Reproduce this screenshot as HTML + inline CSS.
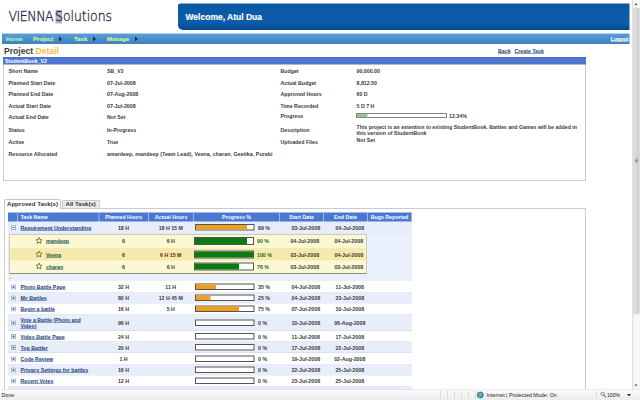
<!DOCTYPE html><html><head><meta charset="utf-8"><title>Project Detail</title><style>
html,body{margin:0;padding:0;background:#fff;overflow:hidden;width:640px;height:400px}
#s{position:absolute;left:0;top:0;width:1280px;height:800px;transform:scale(.5);transform-origin:0 0;font-family:"Liberation Sans",sans-serif;font-weight:bold;font-size:10.5px;color:#3a3a3a;overflow:hidden;background:#fff}
#s div,#s span,#s a{position:absolute;white-space:nowrap;box-sizing:border-box}
.t{line-height:14px;height:14px}
a{color:#1c3f7c;text-decoration:underline}
.nav{color:#d6f59c;-webkit-text-stroke:0.25px;font-size:12px;line-height:20px;top:68px;height:20px}
.arr{width:0;height:0;border-left:6px solid #0c2a5a;border-top:5px solid transparent;border-bottom:5px solid transparent;top:73px}
.hd{color:#fff;top:425px;height:19px;line-height:18px;text-align:center;border-right:2px solid #9db6ea;font-size:10.5px}
.c{text-align:center}
.pb{border:2px solid #555;background:#fff;height:13px}
.pf{left:0;top:0;height:9px}
</style></head><body><div id="s">
<div style="left:111px;top:20px;width:13px;height:27px;background:#b4b4bd"></div>
<div id="lg1" style="left:17px;top:20px;font-family:'DejaVu Sans Light','DejaVu Sans',sans-serif;font-size:25px;font-weight:200;line-height:32px;color:#1b2140;-webkit-text-stroke:0.55px #1b2140;transform:scaleY(1.17);transform-origin:0 100%;letter-spacing:-0.9px">VIENNA</div>
<div id="lg2" style="left:110px;top:20px;font-family:'DejaVu Sans Light','DejaVu Sans',sans-serif;font-size:25px;font-weight:200;line-height:32px;color:#1b2140;-webkit-text-stroke:0.55px #1b2140;transform:scaleY(1.17);transform-origin:0 100%;letter-spacing:-0.1px">Solutions</div>
<div style="left:356px;top:7px;width:903px;height:53px;background:linear-gradient(#0a58a6 0%,#0c5dab 70%,#084a8f 100%);border-radius:4px 0 0 10px"></div>
<div style="left:371px;top:24px;font-size:17px;line-height:22px;color:#fff;-webkit-text-stroke:0.3px #fff">Welcome, Atul Dua</div>
<div style="left:4px;top:66px;width:1255px;height:22px;background:linear-gradient(#d8eefa 0,#5a9bd3 3px,#4a8fca 12px,#3d80bd 100%)"></div>
<div class="nav" style="left:12px;color:#a4f2b4">Home</div>
<div class="nav" style="left:66px;color:#d6f59c">Project</div>
<div class="nav" style="left:148px;color:#d6f59c">Task</div>
<div class="nav" style="left:214px;color:#d6f59c">Manage</div>
<div class="arr" style="left:118px"></div>
<div class="arr" style="left:186px"></div>
<div class="arr" style="left:270px"></div>
<a class="nav" style="right:23px;color:#fff;font-size:10.5px">Logout</a>
<div style="left:8px;top:91px;font-size:17.2px;line-height:22px;color:#3c3c3c">Project <span style="position:static;color:#efc04e">Detail</span></div>
<a class="t" style="left:996px;top:95px">Back</a><a class="t" style="left:1029px;top:95px">Create Task</a>
<div style="left:6px;top:114px;width:1166px;height:248px;border:2px solid #cbcbcb;border-top:none"></div>
<div style="left:6px;top:114px;width:1166px;height:15px;background:linear-gradient(#4a6cc4 0,#5379d8 5px,#4f74d0 11px,#5a72b8 100%)"></div>
<div class="t" style="left:10px;top:114px;color:#fff">StudentBook_V2</div>
<div class="t" style="left:17px;top:135px">Short Name</div><div class="t" style="left:214px;top:135px;letter-spacing:0px">SB_V2</div>
<div class="t" style="left:17px;top:158.5px">Planned Start Date</div><div class="t" style="left:214px;top:158.5px;letter-spacing:0px">07-Jul-2008</div>
<div class="t" style="left:17px;top:180px">Planned End Date</div><div class="t" style="left:214px;top:180px;letter-spacing:0px">07-Aug-2008</div>
<div class="t" style="left:17px;top:204.5px">Actual Start Date</div><div class="t" style="left:214px;top:204.5px;letter-spacing:0px">07-Jul-2008</div>
<div class="t" style="left:17px;top:226px">Actual End Date</div><div class="t" style="left:214px;top:226px;letter-spacing:0px">Not Set</div>
<div class="t" style="left:17px;top:252.5px">Status</div><div class="t" style="left:214px;top:252.5px;letter-spacing:0px">In-Progress</div>
<div class="t" style="left:17px;top:277px">Active</div><div class="t" style="left:214px;top:277px;letter-spacing:0px">True</div>
<div class="t" style="left:17px;top:301px">Resource Allocated</div><div class="t" style="left:214px;top:301px;letter-spacing:0.11px">amardeep, mandeep (Team Lead), Veena, charan, Geetika, Purabi</div>
<div class="t" style="left:561px;top:135px">Budget</div>
<div class="t" style="left:713px;top:135px">90,000.00</div>
<div class="t" style="left:561px;top:158.5px">Actual Budget</div>
<div class="t" style="left:713px;top:158.5px">8,812.50</div>
<div class="t" style="left:561px;top:180px">Approved Hours</div>
<div class="t" style="left:713px;top:180px">60 D</div>
<div class="t" style="left:561px;top:204.5px">Time Recorded</div>
<div class="t" style="left:713px;top:204.5px">5 D 7 H</div>
<div class="t" style="left:561px;top:224px">Progress</div>
<div class="t" style="left:561px;top:252.5px">Description</div>
<div class="t" style="left:561px;top:276px">Uploaded Files</div>
<div style="left:712px;top:226px;width:182px;height:10px;border:2px solid #7d8a7d;background:#fff"><div style="left:0;top:0;width:21px;height:6px;background:#8fc79b"></div></div>
<div class="t" style="left:898px;top:224px">12.34%</div>
<div class="t" style="left:713px;top:247px">This project is an extention to existing StudentBook. Battles and Games will be added in</div>
<div class="t" style="left:713px;top:259px">this version of StudentBook</div>
<div class="t" style="left:713px;top:273px">Not Set</div>
<div style="left:8px;top:416px;width:1164px;height:400px;border:2px solid #cbcbcb"></div>
<div style="left:8px;top:398px;width:114px;height:20px;border:2px solid #c8c8c8;border-bottom:none;background:#fff;border-radius:4px 4px 0 0"></div>
<div style="left:124px;top:400px;width:77px;height:16px;border:2px solid #c8c8c8;border-bottom:none;background:#e9e9ee;border-radius:4px 4px 0 0"></div>
<div style="left:14px;top:400px;font-size:12.2px;line-height:16px;color:#333">Approved Task(s)</div>
<div style="left:131px;top:400px;font-size:12.2px;line-height:16px;color:#333">All Task(s)</div>
<div style="left:16px;top:425px;width:808px;height:19px;background:#4b78d1"></div>
<div class="hd" style="left:16px;width:20px;"></div>
<div class="hd" style="left:36px;width:163px;text-align:left;padding-left:5px;">Task Name</div>
<div class="hd" style="left:199px;width:99px;">Planned Hours</div>
<div class="hd" style="left:298px;width:90px;">Actual Hours</div>
<div class="hd" style="left:388px;width:172px;">Progress %</div>
<div class="hd" style="left:560px;width:88px;">Start Date</div>
<div class="hd" style="left:648px;width:88px;">End Date</div>
<div class="hd" style="left:736px;width:88px;">Bugs Reported</div>
<div style="left:16px;top:443px;width:808px;height:24px;background:#e7eefa;border-bottom:1.5px solid #c9d3e8"></div>
<svg style="position:absolute;left:22px;top:450.0px" width="10" height="10" viewBox="0 0 10 10"><rect x="0.75" y="0.75" width="8.5" height="8.5" fill="#f5f7fc" stroke="#97a5c2" stroke-width="1.5"/><path d="M2.6 5H7.4" stroke="#34508c" stroke-width="1.5"/></svg>
<a class="t" style="left:41px;top:448.0px">Requirement Understanding</a>
<div class="t c" style="left:197px;width:100px;top:448.0px">18 H</div>
<div class="t c" style="left:297px;width:89px;top:448.0px">18 H 15 M</div>
<div class="pb" style="left:390px;top:448.0px;width:119px"><div class="pf" style="width:102px;background:#f0a01e"></div></div>
<div class="t" style="left:516px;top:448.0px">89 %</div>
<div class="t c" style="left:567px;width:89px;top:448.0px">03-Jul-2008</div>
<div class="t c" style="left:656px;width:87px;top:448.0px">04-Jul-2008</div>
<div style="left:16px;top:467px;width:808px;height:95px;background:#eaf0fb"></div>
<div style="left:19px;top:469px;width:714px;height:79px;border:1.5px solid #a3a394;border-bottom:2px solid #8f8f80;background:#fcf8d4"></div>
<div style="left:21px;top:496px;width:710px;height:25px;background:#f5eaad"></div>
<div class="t" style="left:19px;top:546px;color:#555">.</div>
<svg style="position:absolute;left:71px;top:474px" width="14" height="14" viewBox="0 0 14 14"><path d="M7 1.2 L8.8 5.1 L13 5.6 L9.9 8.5 L10.7 12.7 L7 10.6 L3.3 12.7 L4.1 8.5 L1 5.6 L5.2 5.1 Z" fill="#fff4a0" stroke="#554c1c" stroke-width="1.4" stroke-linejoin="round"/></svg>
<a class="t" style="left:92px;top:475px;color:#27584c">mandeep</a>
<div class="t c" style="left:197px;width:100px;top:475px;color:#3a3a3a">6</div>
<div class="t c" style="left:297px;width:89px;top:475px;color:#3a3a3a">6 H</div>
<div class="pb" style="left:388px;top:474px;width:120px;height:16px"><div class="pf" style="width:104px;height:12px;background:#0b7a12"></div></div>
<div class="t" style="left:514px;top:475px;color:#1d6a25">90 %</div>
<div class="t c" style="left:565px;width:89px;top:475px">04-Jul-2008</div>
<div class="t c" style="left:654px;width:87px;top:475px">04-Jul-2008</div>
<svg style="position:absolute;left:71px;top:500.5px" width="14" height="14" viewBox="0 0 14 14"><path d="M7 1.2 L8.8 5.1 L13 5.6 L9.9 8.5 L10.7 12.7 L7 10.6 L3.3 12.7 L4.1 8.5 L1 5.6 L5.2 5.1 Z" fill="#fff4a0" stroke="#554c1c" stroke-width="1.4" stroke-linejoin="round"/></svg>
<a class="t" style="left:92px;top:501.5px;color:#27584c">Veena</a>
<div class="t c" style="left:197px;width:100px;top:501.5px;color:#6e2408">6</div>
<div class="t c" style="left:297px;width:89px;top:501.5px;color:#6e2408">6 H 15 M</div>
<div class="pb" style="left:388px;top:500.5px;width:120px;height:16px"><div class="pf" style="width:116px;height:12px;background:#0b7a12"></div></div>
<div class="t" style="left:514px;top:501.5px;color:#1d6a25">100 %</div>
<div class="t c" style="left:565px;width:89px;top:501.5px">03-Jul-2008</div>
<div class="t c" style="left:654px;width:87px;top:501.5px">04-Jul-2008</div>
<svg style="position:absolute;left:71px;top:525px" width="14" height="14" viewBox="0 0 14 14"><path d="M7 1.2 L8.8 5.1 L13 5.6 L9.9 8.5 L10.7 12.7 L7 10.6 L3.3 12.7 L4.1 8.5 L1 5.6 L5.2 5.1 Z" fill="#fff4a0" stroke="#554c1c" stroke-width="1.4" stroke-linejoin="round"/></svg>
<a class="t" style="left:92px;top:526px;color:#27584c">charan</a>
<div class="t c" style="left:197px;width:100px;top:526px;color:#3a3a3a">6</div>
<div class="t c" style="left:297px;width:89px;top:526px;color:#3a3a3a">6 H</div>
<div class="pb" style="left:388px;top:525px;width:120px;height:16px"><div class="pf" style="width:88px;height:12px;background:#0b7a12"></div></div>
<div class="t" style="left:514px;top:526px;color:#1d6a25">76 %</div>
<div class="t c" style="left:565px;width:89px;top:526px">03-Jul-2008</div>
<div class="t c" style="left:654px;width:87px;top:526px">03-Jul-2008</div>
<div style="left:16px;top:562px;width:808px;height:23px;background:#ffffff;border-bottom:1.5px solid #c9d3e8"></div>
<svg style="position:absolute;left:22px;top:568.5px" width="10" height="10" viewBox="0 0 10 10"><rect x="0.75" y="0.75" width="8.5" height="8.5" fill="#f5f7fc" stroke="#97a5c2" stroke-width="1.5"/><path d="M2.6 5H7.4" stroke="#34508c" stroke-width="1.5"/><path d="M5 2.6V7.4" stroke="#34508c" stroke-width="1.5"/></svg>
<a class="t" style="left:41px;top:566.5px">Photo Battle Page</a>
<div class="t c" style="left:197px;width:100px;top:566.5px">32 H</div>
<div class="t c" style="left:297px;width:89px;top:566.5px">11 H</div>
<div class="pb" style="left:390px;top:566.5px;width:119px"><div class="pf" style="width:40px;background:#f0a01e"></div></div>
<div class="t" style="left:516px;top:566.5px">35 %</div>
<div class="t c" style="left:567px;width:89px;top:566.5px">04-Jul-2008</div>
<div class="t c" style="left:656px;width:87px;top:566.5px">11-Jul-2008</div>
<div style="left:16px;top:585px;width:808px;height:22px;background:#e7eefa;border-bottom:1.5px solid #c9d3e8"></div>
<svg style="position:absolute;left:22px;top:591.0px" width="10" height="10" viewBox="0 0 10 10"><rect x="0.75" y="0.75" width="8.5" height="8.5" fill="#f5f7fc" stroke="#97a5c2" stroke-width="1.5"/><path d="M2.6 5H7.4" stroke="#34508c" stroke-width="1.5"/><path d="M5 2.6V7.4" stroke="#34508c" stroke-width="1.5"/></svg>
<a class="t" style="left:41px;top:589.0px">My Battles</a>
<div class="t c" style="left:197px;width:100px;top:589.0px">80 H</div>
<div class="t c" style="left:297px;width:89px;top:589.0px">12 H 45 M</div>
<div class="pb" style="left:390px;top:589.0px;width:119px"><div class="pf" style="width:29px;background:#f0a01e"></div></div>
<div class="t" style="left:516px;top:589.0px">25 %</div>
<div class="t c" style="left:567px;width:89px;top:589.0px">04-Jul-2008</div>
<div class="t c" style="left:656px;width:87px;top:589.0px">23-Jul-2008</div>
<div style="left:16px;top:607px;width:808px;height:22px;background:#ffffff;border-bottom:1.5px solid #c9d3e8"></div>
<svg style="position:absolute;left:22px;top:613.0px" width="10" height="10" viewBox="0 0 10 10"><rect x="0.75" y="0.75" width="8.5" height="8.5" fill="#f5f7fc" stroke="#97a5c2" stroke-width="1.5"/><path d="M2.6 5H7.4" stroke="#34508c" stroke-width="1.5"/><path d="M5 2.6V7.4" stroke="#34508c" stroke-width="1.5"/></svg>
<a class="t" style="left:41px;top:611.0px">Begin a battle</a>
<div class="t c" style="left:197px;width:100px;top:611.0px">16 H</div>
<div class="t c" style="left:297px;width:89px;top:611.0px">5 H</div>
<div class="pb" style="left:390px;top:611.0px;width:119px"><div class="pf" style="width:86px;background:#f0a01e"></div></div>
<div class="t" style="left:516px;top:611.0px">75 %</div>
<div class="t c" style="left:567px;width:89px;top:611.0px">07-Jul-2008</div>
<div class="t c" style="left:656px;width:87px;top:611.0px">10-Jul-2008</div>
<div style="left:16px;top:629px;width:808px;height:33px;background:#e7eefa;border-bottom:1.5px solid #c9d3e8"></div>
<svg style="position:absolute;left:22px;top:640.5px" width="10" height="10" viewBox="0 0 10 10"><rect x="0.75" y="0.75" width="8.5" height="8.5" fill="#f5f7fc" stroke="#97a5c2" stroke-width="1.5"/><path d="M2.6 5H7.4" stroke="#34508c" stroke-width="1.5"/><path d="M5 2.6V7.4" stroke="#34508c" stroke-width="1.5"/></svg>
<a class="t" style="left:41px;top:631.5px">Vote a Battle (Photo and</a><a class="t" style="left:41px;top:644.5px">Video)</a>
<div class="t c" style="left:197px;width:100px;top:638.5px">96 H</div>
<div class="pb" style="left:390px;top:638.5px;width:119px"><div class="pf" style="width:0px;background:#f0a01e"></div></div>
<div class="t" style="left:516px;top:638.5px">0 %</div>
<div class="t c" style="left:567px;width:89px;top:638.5px">10-Jul-2008</div>
<div class="t c" style="left:656px;width:87px;top:638.5px">06-Aug-2008</div>
<div style="left:16px;top:662px;width:808px;height:22px;background:#ffffff;border-bottom:1.5px solid #c9d3e8"></div>
<svg style="position:absolute;left:22px;top:668.0px" width="10" height="10" viewBox="0 0 10 10"><rect x="0.75" y="0.75" width="8.5" height="8.5" fill="#f5f7fc" stroke="#97a5c2" stroke-width="1.5"/><path d="M2.6 5H7.4" stroke="#34508c" stroke-width="1.5"/><path d="M5 2.6V7.4" stroke="#34508c" stroke-width="1.5"/></svg>
<a class="t" style="left:41px;top:666.0px">Video Battle Page</a>
<div class="t c" style="left:197px;width:100px;top:666.0px">24 H</div>
<div class="pb" style="left:390px;top:666.0px;width:119px"><div class="pf" style="width:0px;background:#f0a01e"></div></div>
<div class="t" style="left:516px;top:666.0px">0 %</div>
<div class="t c" style="left:567px;width:89px;top:666.0px">11-Jul-2008</div>
<div class="t c" style="left:656px;width:87px;top:666.0px">17-Jul-2008</div>
<div style="left:16px;top:684px;width:808px;height:22px;background:#e7eefa;border-bottom:1.5px solid #c9d3e8"></div>
<svg style="position:absolute;left:22px;top:690.0px" width="10" height="10" viewBox="0 0 10 10"><rect x="0.75" y="0.75" width="8.5" height="8.5" fill="#f5f7fc" stroke="#97a5c2" stroke-width="1.5"/><path d="M2.6 5H7.4" stroke="#34508c" stroke-width="1.5"/><path d="M5 2.6V7.4" stroke="#34508c" stroke-width="1.5"/></svg>
<a class="t" style="left:41px;top:688.0px">Top Battler</a>
<div class="t c" style="left:197px;width:100px;top:688.0px">20 H</div>
<div class="pb" style="left:390px;top:688.0px;width:119px"><div class="pf" style="width:0px;background:#f0a01e"></div></div>
<div class="t" style="left:516px;top:688.0px">0 %</div>
<div class="t c" style="left:567px;width:89px;top:688.0px">17-Jul-2008</div>
<div class="t c" style="left:656px;width:87px;top:688.0px">22-Jul-2008</div>
<div style="left:16px;top:706px;width:808px;height:23px;background:#ffffff;border-bottom:1.5px solid #c9d3e8"></div>
<svg style="position:absolute;left:22px;top:712.5px" width="10" height="10" viewBox="0 0 10 10"><rect x="0.75" y="0.75" width="8.5" height="8.5" fill="#f5f7fc" stroke="#97a5c2" stroke-width="1.5"/><path d="M2.6 5H7.4" stroke="#34508c" stroke-width="1.5"/><path d="M5 2.6V7.4" stroke="#34508c" stroke-width="1.5"/></svg>
<a class="t" style="left:41px;top:710.5px">Code Review</a>
<div class="t c" style="left:197px;width:100px;top:710.5px">1 H</div>
<div class="pb" style="left:390px;top:710.5px;width:119px"><div class="pf" style="width:0px;background:#f0a01e"></div></div>
<div class="t" style="left:516px;top:710.5px">0 %</div>
<div class="t c" style="left:567px;width:89px;top:710.5px">19-Jul-2008</div>
<div class="t c" style="left:656px;width:87px;top:710.5px">02-Aug-2008</div>
<div style="left:16px;top:729px;width:808px;height:22px;background:#e7eefa;border-bottom:1.5px solid #c9d3e8"></div>
<svg style="position:absolute;left:22px;top:735.0px" width="10" height="10" viewBox="0 0 10 10"><rect x="0.75" y="0.75" width="8.5" height="8.5" fill="#f5f7fc" stroke="#97a5c2" stroke-width="1.5"/><path d="M2.6 5H7.4" stroke="#34508c" stroke-width="1.5"/><path d="M5 2.6V7.4" stroke="#34508c" stroke-width="1.5"/></svg>
<a class="t" style="left:41px;top:733.0px">Privacy Settings for battles</a>
<div class="t c" style="left:197px;width:100px;top:733.0px">16 H</div>
<div class="pb" style="left:390px;top:733.0px;width:119px"><div class="pf" style="width:0px;background:#f0a01e"></div></div>
<div class="t" style="left:516px;top:733.0px">0 %</div>
<div class="t c" style="left:567px;width:89px;top:733.0px">22-Jul-2008</div>
<div class="t c" style="left:656px;width:87px;top:733.0px">25-Jul-2008</div>
<div style="left:16px;top:751px;width:808px;height:22px;background:#ffffff;border-bottom:1.5px solid #c9d3e8"></div>
<svg style="position:absolute;left:22px;top:757.0px" width="10" height="10" viewBox="0 0 10 10"><rect x="0.75" y="0.75" width="8.5" height="8.5" fill="#f5f7fc" stroke="#97a5c2" stroke-width="1.5"/><path d="M2.6 5H7.4" stroke="#34508c" stroke-width="1.5"/><path d="M5 2.6V7.4" stroke="#34508c" stroke-width="1.5"/></svg>
<a class="t" style="left:41px;top:755.0px">Recent Votes</a>
<div class="t c" style="left:197px;width:100px;top:755.0px">12 H</div>
<div class="pb" style="left:390px;top:755.0px;width:119px"><div class="pf" style="width:0px;background:#f0a01e"></div></div>
<div class="t" style="left:516px;top:755.0px">0 %</div>
<div class="t c" style="left:567px;width:89px;top:755.0px">23-Jul-2008</div>
<div class="t c" style="left:656px;width:87px;top:755.0px">25-Jul-2008</div>
<div style="left:16px;top:773px;width:808px;height:35px;background:#e7eefa;border-bottom:1.5px solid #c9d3e8"></div>
<svg style="position:absolute;left:22px;top:785.5px" width="10" height="10" viewBox="0 0 10 10"><rect x="0.75" y="0.75" width="8.5" height="8.5" fill="#f5f7fc" stroke="#97a5c2" stroke-width="1.5"/><path d="M2.6 5H7.4" stroke="#34508c" stroke-width="1.5"/><path d="M5 2.6V7.4" stroke="#34508c" stroke-width="1.5"/></svg>
<a class="t" style="left:41px;top:783.5px">Battle Comments</a>
<div class="t c" style="left:197px;width:100px;top:783.5px">8 H</div>
<div class="pb" style="left:390px;top:783.5px;width:119px"><div class="pf" style="width:0px;background:#f0a01e"></div></div>
<div class="t" style="left:516px;top:783.5px">0 %</div>
<div class="t c" style="left:567px;width:89px;top:783.5px">25-Jul-2008</div>
<div class="t c" style="left:656px;width:87px;top:783.5px">26-Jul-2008</div>
<div style="left:1264px;top:0;width:16px;height:781px;background:#f7f7f7;border-left:2px solid #dedede"></div>
<div style="left:1267px;top:16px;width:12px;height:612px;background:linear-gradient(90deg,#e2e2e2,#cfcfcf);border:1.5px solid #b5b5b5;border-radius:3px"></div>
<div style="left:1269px;top:6px;width:0;height:0;border-bottom:4px solid #555;border-left:3.5px solid transparent;border-right:3.5px solid transparent"></div>
<div style="left:1269px;top:769px;width:0;height:0;border-top:4px solid #555;border-left:3.5px solid transparent;border-right:3.5px solid transparent"></div>
<div style="left:1270px;top:317px;width:6px;height:1.5px;background:#8c8c8c"></div>
<div style="left:1270px;top:320px;width:6px;height:1.5px;background:#8c8c8c"></div>
<div style="left:1270px;top:323px;width:6px;height:1.5px;background:#8c8c8c"></div>
<div style="left:0;top:779px;width:1280px;height:21px;background:linear-gradient(#fafafa,#ececec);border-top:1.5px solid #dadada"></div>
<div style="left:3px;top:782px;font-size:10.6px;line-height:16px;font-weight:normal;color:#222">Done</div>
<div style="left:880px;top:782px;width:1.5px;height:15px;background:#dadada"></div>
<div style="left:894px;top:782px;width:1.5px;height:15px;background:#dadada"></div>
<div style="left:908px;top:782px;width:1.5px;height:15px;background:#dadada"></div>
<div style="left:922px;top:782px;width:1.5px;height:15px;background:#dadada"></div>
<div style="left:936px;top:782px;width:1.5px;height:15px;background:#dadada"></div>
<div style="left:950px;top:782px;width:1.5px;height:15px;background:#dadada"></div>
<div style="left:1192px;top:782px;width:1.5px;height:15px;background:#dadada"></div>
<svg style="position:absolute;left:953px;top:782px" width="15" height="16" viewBox="0 0 16 16"><circle cx="8" cy="8" r="6.5" fill="#3b9bd0" stroke="#1f6a58" stroke-width="1.5"/><path d="M4 6 Q7 3 10 5 Q12 8 8 9 Q5 10 6 13" fill="none" stroke="#8ed08a" stroke-width="2"/></svg>
<div style="left:973px;top:782px;font-size:10.7px;line-height:16px;font-weight:normal;color:#222">Internet | Protected Mode: On</div>
<svg style="position:absolute;left:1200px;top:782px" width="13" height="14" viewBox="0 0 14 14"><circle cx="5.5" cy="5.5" r="3.6" fill="#dff0ff" stroke="#4a6a9a" stroke-width="1.5"/><path d="M8.3 8.3 L12.5 12.5" stroke="#8a6a3a" stroke-width="2.2" stroke-linecap="round"/></svg>
<div style="left:1214px;top:782px;font-size:10.2px;line-height:16px;font-weight:normal;color:#222">100%</div>
<div style="left:1254px;top:788px;width:0;height:0;border-top:5px solid #333;border-left:4px solid transparent;border-right:4px solid transparent"></div>
</div></body></html>
